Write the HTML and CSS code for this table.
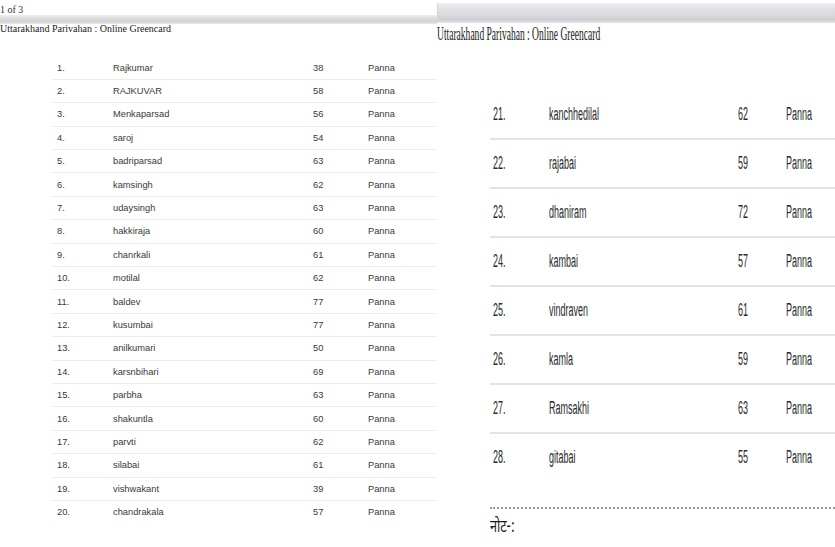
FILE: index.html
```html
<!DOCTYPE html>
<html lang="en">
<head>
<meta charset="utf-8">
<title>Uttarakhand Parivahan : Online Greencard</title>
<link rel="stylesheet" href="styles.css">
</head>
<body>
<div class="sheet">
  <section class="page page-left">
    <div class="pno">1 of 3</div>
    <div class="bar"></div>
    <div class="title">Uttarakhand Parivahan : Online Greencard</div>
    <div class="list list-left">
      <div class="row"><span>1.</span><span>Rajkumar</span><span>38</span><span>Panna</span></div>
      <div class="row"><span>2.</span><span>RAJKUVAR</span><span>58</span><span>Panna</span></div>
      <div class="row"><span>3.</span><span>Menkaparsad</span><span>56</span><span>Panna</span></div>
      <div class="row"><span>4.</span><span>saroj</span><span>54</span><span>Panna</span></div>
      <div class="row"><span>5.</span><span>badriparsad</span><span>63</span><span>Panna</span></div>
      <div class="row"><span>6.</span><span>kamsingh</span><span>62</span><span>Panna</span></div>
      <div class="row"><span>7.</span><span>udaysingh</span><span>63</span><span>Panna</span></div>
      <div class="row"><span>8.</span><span>hakkiraja</span><span>60</span><span>Panna</span></div>
      <div class="row"><span>9.</span><span>chanrkali</span><span>61</span><span>Panna</span></div>
      <div class="row"><span>10.</span><span>motilal</span><span>62</span><span>Panna</span></div>
      <div class="row"><span>11.</span><span>baldev</span><span>77</span><span>Panna</span></div>
      <div class="row"><span>12.</span><span>kusumbai</span><span>77</span><span>Panna</span></div>
      <div class="row"><span>13.</span><span>anilkumari</span><span>50</span><span>Panna</span></div>
      <div class="row"><span>14.</span><span>karsnbihari</span><span>69</span><span>Panna</span></div>
      <div class="row"><span>15.</span><span>parbha</span><span>63</span><span>Panna</span></div>
      <div class="row"><span>16.</span><span>shakuntla</span><span>60</span><span>Panna</span></div>
      <div class="row"><span>17.</span><span>parvti</span><span>62</span><span>Panna</span></div>
      <div class="row"><span>18.</span><span>silabai</span><span>61</span><span>Panna</span></div>
      <div class="row"><span>19.</span><span>vishwakant</span><span>39</span><span>Panna</span></div>
      <div class="row"><span>20.</span><span>chandrakala</span><span>57</span><span>Panna</span></div>
    </div>
  </section>
  <section class="page page-right">
    <div class="pno2"></div>
    <div class="bar bar2"></div>
    <div class="title2"><span class="nar">Uttarakhand Parivahan : Online Greencard</span></div>
    <div class="list list-right">
      <div class="row"><span class="nar">21.</span><span class="nar">kanchhedilal</span><span class="nar">62</span><span class="nar">Panna</span></div>
      <div class="row"><span class="nar">22.</span><span class="nar">rajabai</span><span class="nar">59</span><span class="nar">Panna</span></div>
      <div class="row"><span class="nar">23.</span><span class="nar">dhaniram</span><span class="nar">72</span><span class="nar">Panna</span></div>
      <div class="row"><span class="nar">24.</span><span class="nar">kambai</span><span class="nar">57</span><span class="nar">Panna</span></div>
      <div class="row"><span class="nar">25.</span><span class="nar">vindraven</span><span class="nar">61</span><span class="nar">Panna</span></div>
      <div class="row"><span class="nar">26.</span><span class="nar">kamla</span><span class="nar">59</span><span class="nar">Panna</span></div>
      <div class="row"><span class="nar">27.</span><span class="nar">Ramsakhi</span><span class="nar">63</span><span class="nar">Panna</span></div>
      <div class="row"><span class="nar">28.</span><span class="nar">gitabai</span><span class="nar">55</span><span class="nar">Panna</span></div>
    </div>
    <div class="dots"></div>
    <div class="note"><span class="nar">नोट-:</span></div>
  </section>
</div>
</body>
</html>
```

FILE: styles.css
```css
html, body {
  margin: 0;
  padding: 0;
  background: #fff;
  overflow: hidden;
}

.sheet {
  display: flex;
  width: 835px;
  height: 547px;
}

.page {
  box-sizing: border-box;
}

.page-left {
  width: 437px;
  flex: none;
  font-family: "Liberation Serif", "Times New Roman", serif;
  color: #222;
}

.pno {
  height: 15px;
  box-sizing: border-box;
  padding-top: 3px;
  font-size: 10px;
  line-height: 13px;
  color: #333;
}

.bar {
  height: 9px;
  background: linear-gradient(#efefef, #d9d9d9 45%, #d4d4d4 70%, #e6e6e6);
}

.title {
  font-size: 10px;
  line-height: 10px;
  color: #222;
}

.list-left {
  margin-top: 22.3px;
  margin-left: 52px;
  font-family: "Liberation Sans", Arial, sans-serif;
  font-size: 9.3px;
  color: #383838;
}

.list-left .row {
  display: grid;
  grid-template-columns: 56px 200px 55px 1fr;
  align-items: center;
  height: 23.42px;
  box-sizing: border-box;
  padding-left: 5px;
  border-bottom: 1px solid #ececec;
}

.list-left .row:last-child {
  border-bottom-color: transparent;
}

.page-right {
  flex: 1;
  color: #2a2a2a;
}

.pno2 {
  height: 3px;
}

.bar2 {
  height: 20px;
  border-left: 1px solid #d8d8d8;
  background: linear-gradient(#f1f1f4, #e1e1e5 30%, #d9d9de 60%, #cdcdd2 85%, #e9e9ec);
}

.nar {
  display: inline-block;
  transform-origin: left center;
  white-space: nowrap;
}

.title2 {
  margin-top: 1px;
  font-family: "Liberation Serif", "Times New Roman", serif;
  font-size: 18px;
  line-height: 20px;
  color: #1a1a1a;
}

.title2 .nar {
  transform: scaleX(0.53);
}

.list-right {
  margin-top: 46.5px;
  margin-left: 53px;
  font-family: "Liberation Sans", Arial, sans-serif;
  font-size: 18px;
  color: #2a2a2a;
}

.list-right .row {
  display: grid;
  grid-template-columns: 56px 189px 48px 1fr;
  align-items: center;
  height: 49px;
  box-sizing: border-box;
  padding-left: 3px;
  border-bottom: 2px solid #e3e3e3;
}

.list-right .row:last-child {
  border-bottom-color: transparent;
}

.list-right .nar {
  transform: scaleX(0.5);
}

.dots {
  margin-top: 24.5px;
  margin-left: 53px;
  border-top: 2px dotted #9a9a9a;
}

.note {
  margin-top: 8px;
  margin-left: 53px;
  font-family: "Noto Sans Devanagari", "Lohit Devanagari", "FreeSans", "Noto Sans", sans-serif;
  font-size: 18px;
  line-height: 22px;
  color: #1a1a1a;
}

.note .nar {
  transform: scaleX(0.7);
}
```
